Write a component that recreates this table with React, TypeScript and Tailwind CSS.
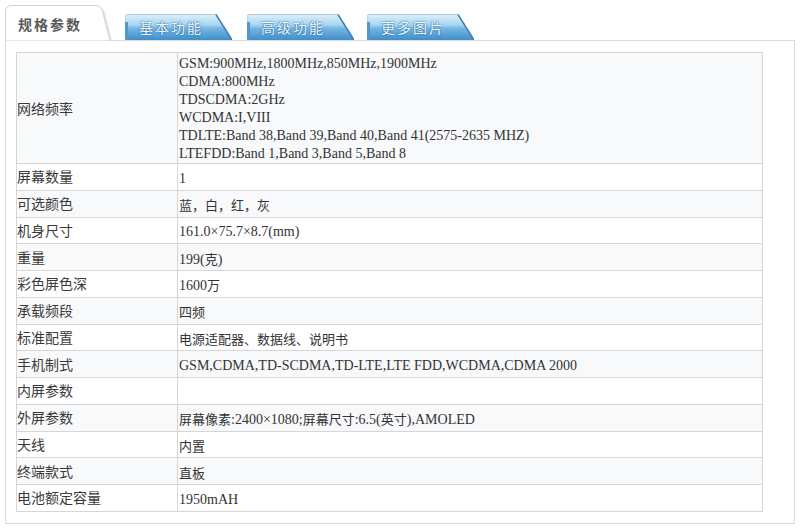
import React from 'react';

const specs: { label: string; value: string[] }[] = [
  {
    label: '网络频率',
    value: [
      'GSM:900MHz,1800MHz,850MHz,1900MHz',
      'CDMA:800MHz',
      'TDSCDMA:2GHz',
      'WCDMA:I,VIII',
      'TDLTE:Band 38,Band 39,Band 40,Band 41(2575-2635 MHZ)',
      'LTEFDD:Band 1,Band 3,Band 5,Band 8',
    ],
  },
  { label: '屏幕数量', value: ['1'] },
  { label: '可选颜色', value: ['蓝，白，红，灰'] },
  { label: '机身尺寸', value: ['161.0×75.7×8.7(mm)'] },
  { label: '重量', value: ['199(克)'] },
  { label: '彩色屏色深', value: ['1600万'] },
  { label: '承载频段', value: ['四频'] },
  { label: '标准配置', value: ['电源适配器、数据线、说明书'] },
  { label: '手机制式', value: ['GSM,CDMA,TD-SCDMA,TD-LTE,LTE FDD,WCDMA,CDMA 2000'] },
  { label: '内屏参数', value: [''] },
  { label: '外屏参数', value: ['屏幕像素:2400×1080;屏幕尺寸:6.5(英寸),AMOLED'] },
  { label: '天线', value: ['内置'] },
  { label: '终端款式', value: ['直板'] },
  { label: '电池额定容量', value: ['1950mAH'] },
];

// chinese runs in the value column are a touch smaller than the latin text
function Mixed({ text }: { text: string }) {
  const parts = text.split(/([\u3000-\u303f\u4e00-\u9fff\uff00-\uffef]+)/);
  return (
    <>
      {parts.map((p, k) =>
        /[\u3000-\u303f\u4e00-\u9fff\uff00-\uffef]/.test(p) ? (
          <span key={k} className="text-[13px] [font-family:'Noto_Sans_CJK_SC',sans-serif]">
            {p}
          </span>
        ) : (
          <React.Fragment key={k}>{p}</React.Fragment>
        )
      )}
    </>
  );
}

function ActiveTab({ title }: { title: string }) {
  return (
    <div className="relative z-10 -mb-px h-[37px] w-[108px] shrink-0">
      <svg className="absolute inset-0" width="108" height="37" viewBox="0 0 108 37">
        <path d="M3 37 L3 10 Q3 3 10 3 L92 3 Q98 3 100 9 L107 37 Z" fill="#e2e2e2" />
        <path d="M0.5 37 L0.5 8 Q0.5 1.5 7 1.5 L90 1.5 Q95.5 1.5 97.5 7 L105 37 Z" fill="#ffffff" stroke="#cfcfcf" />
      </svg>
      <div className="relative pl-[13px] pt-[10px] text-[14px] font-bold tracking-[2px] text-[#5a5a5a] [font-family:'Noto_Sans_CJK_SC',sans-serif]">
        {title}
      </div>
    </div>
  );
}

function BlueTab({ title, id }: { title: string; id: string }) {
  return (
    <div className="relative h-[26px] w-[107px] shrink-0">
      <svg className="absolute inset-0" width="107" height="26" viewBox="0 0 107 26">
        <defs>
          <linearGradient id={id} x1="0" y1="0" x2="0" y2="1">
            <stop offset="0" stopColor="#dcf0fa" />
            <stop offset="0.4" stopColor="#a9d6f0" />
            <stop offset="0.55" stopColor="#74b6e2" />
            <stop offset="1" stopColor="#3e8ecb" />
          </linearGradient>
        </defs>
        <path d="M0 26 L0 3 Q0 0.5 3 0.5 L91 0.5 L107 26 Z" fill={`url(#${id})`} />
        <path d="M0 26 L0 3 Q0 0.5 3 0.5 L91 0.5" fill="none" stroke="#b9c9d4" />
        <path d="M91 0.5 L107 26" stroke="#3f7fae" strokeWidth="1.5" />
        <rect x="0" y="8" width="3" height="18" fill="#4f97cc" />
      </svg>
      <div className="relative pl-[14px] pt-[3px] text-[14px] tracking-[2px] text-[#eef8fd] [font-family:'Noto_Sans_CJK_SC',sans-serif] [text-shadow:0_0_1px_#2a6ea3,0_0_2px_#2a6ea3]">
        {title}
      </div>
    </div>
  );
}

export default function App() {
  return (
    <div className="h-[528px] w-[800px] overflow-hidden bg-white pt-[4px] text-[#333] [font-family:'Liberation_Serif','Noto_Sans_CJK_SC',serif]">
      <div className="flex items-end pl-[5px]">
        <ActiveTab title="规格参数" />
        <div className="ml-[12px]">
          <BlueTab title="基本功能" id="g1" />
        </div>
        <div className="ml-[15px]">
          <BlueTab title="高级功能" id="g2" />
        </div>
        <div className="ml-[13px]">
          <BlueTab title="更多图片" id="g3" />
        </div>
      </div>
      <div className="ml-[5px] h-[484px] w-[790px] border border-[#dcdcdc] pl-[10px] pt-[11px]">
        <table className="w-[747px] border-collapse text-[14px]">
          <tbody>
            {specs.map((row, i) => (
              <tr key={row.label} className={i % 2 === 0 ? 'bg-[#f7f9fb]' : 'bg-white'}>
                <td
                  className={
                    'w-[161px] border border-[#d6d6d6] pl-0 align-middle text-[14px] text-[#3a3a3a] [font-family:"Noto_Sans_CJK_SC",sans-serif] ' +
                    (i === 0 ? 'h-[110px]' : 'h-[26.75px]')
                  }
                >
                  {row.label}
                </td>
                <td
                  className={
                    'border border-[#d6d6d6] pl-[1px] align-middle ' +
                    (i === 0 ? 'pt-[2px] pb-0 leading-[18px]' : 'pt-[4px] pb-0 leading-[18px]')
                  }
                >
                  {row.value.map((line, j) => (
                    <div key={j}>
                      <Mixed text={line} />
                    </div>
                  ))}
                </td>
              </tr>
            ))}
          </tbody>
        </table>
      </div>
    </div>
  );
}
